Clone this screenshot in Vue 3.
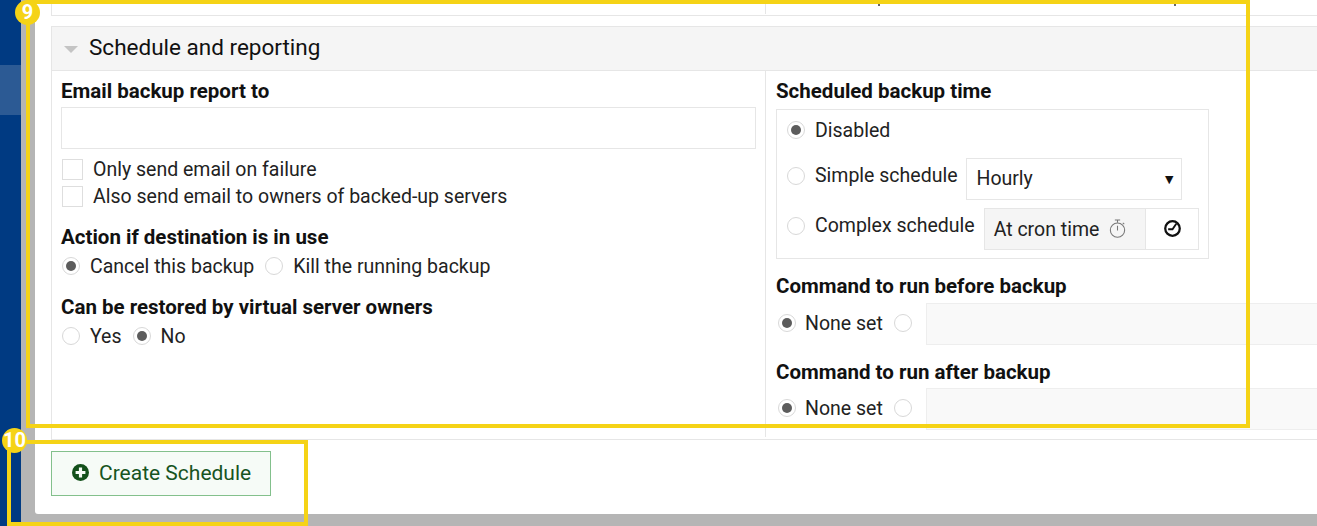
<script setup>
const firstRadios = [
  { label: 'Cancel this backup', on: true },
  { label: 'Kill the running backup', on: false },
]
const ownerRadios = [
  { label: 'Yes', on: false },
  { label: 'No', on: true },
]
const commands = ['Command to run before backup', 'Command to run after backup']
</script>

<template>
  <div class="page">
    <aside class="side"><div class="side-active"></div></aside>
    <main class="main">
      <div class="panel">
        <div class="top-row">
          <div class="top-left"></div>
          <div class="top-right"><i class="mark m1"></i><i class="mark m2"></i></div>
        </div>
        <section class="group">
          <header class="group-head">
            <span class="caret"></span>
            <span class="group-title">Schedule and reporting</span>
          </header>
          <div class="cols">
            <div class="col-left">
              <div class="label first">Email backup report to</div>
              <div class="input"></div>
              <label class="check first-check"><span class="box"></span>Only send email on failure</label>
              <label class="check"><span class="box"></span>Also send email to owners of backed-up servers</label>
              <div class="label action">Action if destination is in use</div>
              <div class="radios">
                <label v-for="r in firstRadios" :key="r.label" class="radio-item">
                  <span class="radio" :class="{ on: r.on }"></span>{{ r.label }}
                </label>
              </div>
              <div class="label restore">Can be restored by virtual server owners</div>
              <div class="radios">
                <label v-for="r in ownerRadios" :key="r.label" class="radio-item">
                  <span class="radio" :class="{ on: r.on }"></span>{{ r.label }}
                </label>
              </div>
            </div>
            <div class="col-right">
              <div class="label first">Scheduled backup time</div>
              <div class="sched">
                <div class="sched-row r1"><span class="radio on"></span><span class="sched-text">Disabled</span></div>
                <div class="sched-row r2">
                  <span class="radio"></span><span class="sched-text">Simple schedule</span>
                  <div class="select"><span class="select-value">Hourly</span><span class="arrow">▼</span></div>
                </div>
                <div class="sched-row r3">
                  <span class="radio"></span><span class="sched-text">Complex schedule</span>
                  <div class="cron">
                    <div class="cron-a">
                      <span>At cron time</span>
                      <svg class="watch" viewBox="0 0 16 18" width="17" height="19" fill="none" stroke="#777" stroke-width="1">
                        <circle cx="8" cy="10.5" r="6.8" />
                        <path d="M5.5 1h5M8 1v2.6M8 6.5v4.5M13 3.6l1.4 1.3" />
                      </svg>
                    </div>
                    <div class="cron-b">
                      <svg class="clock" viewBox="0 0 18 18" width="17" height="17" fill="none" stroke="#111" stroke-width="2.4">
                        <circle cx="9" cy="9" r="7.7" />
                        <path d="M13 4 9 9.8H4.4" stroke-width="2" />
                      </svg>
                    </div>
                  </div>
                </div>
              </div>
              <template v-for="(c, i) in commands" :key="c">
                <div class="label" :class="i === 0 ? 'cmd-a' : 'cmd-b'">{{ c }}</div>
                <div class="cmd-row" :class="i === 0 ? 'row-a' : 'row-b'">
                  <span class="radio on"></span><span class="cmd-text">None set</span><span class="radio"></span>
                  <div class="cmd-input"></div>
                </div>
              </template>
            </div>
          </div>
        </section>
        <div class="actions">
          <button class="create" type="button">
            <svg viewBox="0 0 16 16" width="17" height="17">
              <circle cx="8" cy="8" r="8" fill="#13501b" />
              <path d="M8 3.4v9.2M3.4 8h9.2" stroke="#f6fbf7" stroke-width="3" />
            </svg>
            Create Schedule
          </button>
        </div>
      </div>
    </main>

    <div class="hl hl9"></div>
    <div class="hl hl10"></div>
    <div class="badge b9">9</div>
    <div class="badge b10">10</div>
  </div>
</template>

<style>
html, body { margin: 0; overflow: hidden; background: #fff; }
</style>

<style scoped>
.page {
  position: relative;
  display: flex;
  width: 1317px;
  height: 526px;
  overflow: hidden;
  font-family: Roboto, "Liberation Sans", sans-serif;
  font-size: 19.5px;
  color: #111;
}
.side { width: 21px; flex: none; background: #003a82; padding-top: 65px; box-sizing: border-box; }
.side-active { height: 50px; background: #2c5a94; }
.main { flex: 1; min-width: 0; background: #b5b5b5; padding: 0 0 12px 14px; box-sizing: border-box; }
.panel {
  height: 514px;
  background: #fff;
  border-bottom-left-radius: 3px;
  padding-left: 16px;
  box-sizing: border-box;
  overflow: hidden;
}
.top-row {
  display: flex;
  height: 15px;
  border-left: 1px solid #e6e6e6;
  border-bottom: 1px solid #e6e6e6;
  width: 1300px;
}
.top-left { width: 713px; }
.top-right { flex: 1; border-left: 1px solid #e6e6e6; position: relative; margin-bottom: 1px; }
.mark { position: absolute; top: 4px; width: 2px; height: 2px; background: #666; }
.m1 { left: 112px; }
.m2 { left: 408px; }
.group { margin-top: 10px; width: 1300px; }
.group-head {
  display: flex;
  align-items: center;
  height: 43px;
  background: #f5f5f5;
  border: 1px solid #e6e6e6;
  border-right: 0;
}
.caret {
  width: 0;
  height: 0;
  margin-left: 12px;
  margin-top: 1px;
  border-left: 7px solid transparent;
  border-right: 7px solid transparent;
  border-top: 7px solid #c4c4c4;
}
.group-title { margin: 0 0 4px 11px; font-size: 22.5px; color: #111; }
.cols {
  display: flex;
  height: 368px;
  border-left: 1px solid #e6e6e6;
  border-bottom: 1px solid #e6e6e6;
}
.col-left { width: 713px; padding-left: 9px; box-sizing: border-box; flex: none; }
.col-right { flex: 1; min-width: 0; border-left: 1px solid #e6e6e6; padding-left: 10px; margin-bottom: 2px; }
.label { font-weight: 700; font-size: 20.5px; line-height: 22px; color: #111; }
.first { margin-top: 9px; }
.input {
  margin-top: 5px;
  width: 695px;
  height: 42px;
  border: 1px solid #e6e6e6;
  box-sizing: border-box;
}
.check { display: flex; align-items: center; height: 27px; color: #222; }
.first-check { margin-top: 7px; }
.box {
  width: 21px;
  height: 21px;
  margin: 0 10px 1px 1px;
  border: 1px solid #dedede;
  box-sizing: border-box;
  background: #fff;
}
.action { margin-top: 16px; }
.radios { display: flex; height: 30px; align-items: center; margin-top: 3px; color: #222; }
.radio-item { display: flex; align-items: center; margin-right: 10px; }
.radio {
  position: relative;
  flex: none;
  width: 18px;
  height: 18px;
  margin: 0 10px 0 1px;
  border: 1px solid #d8d8d8;
  border-radius: 50%;
  box-sizing: border-box;
  background: #fff;
}
.radio.on::after {
  content: "";
  position: absolute;
  inset: 3px;
  border-radius: 50%;
  background: #5c5c5c;
}
.restore { margin-top: 15px; }
.sched {
  width: 433px;
  height: 150px;
  margin-top: 7px;
  border: 1px solid #e6e6e6;
  box-sizing: border-box;
  padding: 0 0 0 10px;
  color: #222;
}
.sched-row { display: flex; align-items: center; }
.sched-row .radio { margin: 0 10px 0 0; }
.r1 { height: 22px; margin-top: 9px; }
.r2 { height: 42px; margin-top: 17px; }
.r3 { height: 42px; margin-top: 8px; }
.r2 .radio, .r3 .radio { margin-bottom: 7px; }
.r2 .sched-text, .r3 .sched-text { margin-bottom: 8px; }
.select {
  display: flex;
  justify-content: space-between;
  align-items: center;
  width: 216px;
  height: 42px;
  margin-left: 9px;
  padding: 0 8px 0 9px;
  border: 1px solid #e6e6e6;
  box-sizing: border-box;
}
.select-value { margin-bottom: 2px; }
.arrow { font-size: 11px; color: #111; font-family: "DejaVu Sans", sans-serif; }
.cron { display: flex; height: 42px; margin-left: 9px; border: 1px solid #e6e6e6; box-sizing: border-box; width: 215px; }
.cron-a {
  width: 161px;
  display: flex;
  align-items: center;
  gap: 10px;
  padding-left: 9px;
  background: #f5f5f5;
  border-right: 1px solid #e6e6e6;
  box-sizing: border-box;
}
.cron-b { flex: 1; display: flex; align-items: center; justify-content: center; }
.clock { margin: 0 0 2px 1px; }
.watch { margin-bottom: 1px; }
.cmd-a { margin-top: 16px; }
.cmd-b { margin-top: 16px; }
.cmd-row { display: flex; align-items: center; height: 42px; color: #222; }
.row-a { margin-top: 6px; }
.row-b { margin-top: 5px; }
.cmd-row .radio { margin: 0 0 2px 2px; }
.cmd-text { margin: 0 9px 2px 9px; }
.cmd-input {
  flex: 1;
  height: 42px;
  margin-left: 14px;
  background: #f9f9f9;
  border: 1px solid #eee;
  box-sizing: border-box;
}
.actions { padding-top: 11px; }
.create {
  display: flex;
  align-items: center;
  gap: 10px;
  width: 220px;
  height: 45px;
  padding: 0 0 2px 20px;
  background: #f6fbf7;
  border: 1px solid #83c08c;
  box-sizing: border-box;
  color: #17541f;
  font: 400 21px Roboto, sans-serif;
}
.hl { position: absolute; border: 4px solid #f5d316; box-sizing: border-box; }
.hl9 { left: 26px; top: 0; width: 1224px; height: 428px; }
.hl10 { left: 7px; top: 440px; width: 301px; height: 86px; }
.badge {
  position: absolute;
  width: 25px;
  height: 25px;
  border-radius: 50%;
  background: #f5d316;
  color: #fff;
  font-weight: 700;
  font-size: 20px;
  line-height: 25px;
  text-align: center;
}
.b9 { left: 15px; top: 0; }
.b10 { left: 2px; top: 428px; }
</style>
